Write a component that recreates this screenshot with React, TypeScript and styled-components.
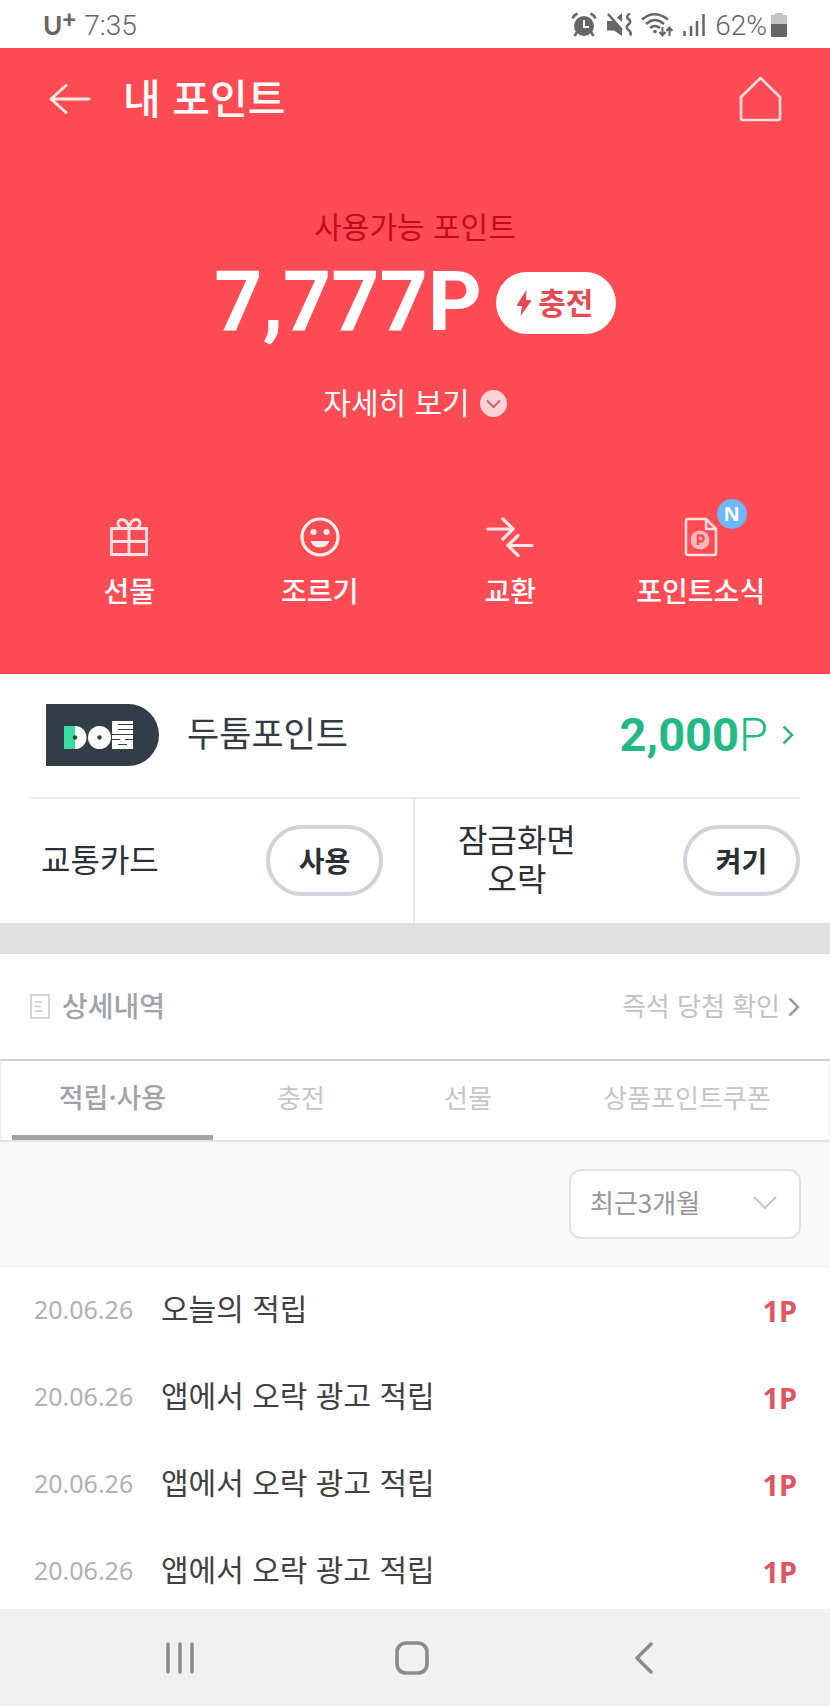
import React from "react";
import styled, { createGlobalStyle } from "styled-components";

const red = "#ff4b53";
const hangul = `"Noto Sans CJK KR", "Noto Sans", sans-serif`;
const latin = `Roboto, "Noto Sans CJK KR", sans-serif`;

const GlobalStyle = createGlobalStyle`
  *, *::before, *::after { box-sizing: border-box; }
  body { margin: 0; background: #ffffff; }
  button, select { font-family: inherit; color: inherit; cursor: pointer; }
  h1, h2, p, ul { margin: 0; padding: 0; font-weight: inherit; }
  svg { display: block; flex: none; }
`;

const Page = styled.div`
  display: flex;
  flex-direction: column;
  min-height: 100vh;
  font-family: ${hangul};
  color: #2b3036;
`;

const PlainButton = styled.button`
  display: flex;
  align-items: center;
  justify-content: center;
  padding: 0;
  border: 0;
  background: none;
`;

/* Hangul sits low in its line box, so labels carry a little space below. */
const Label = styled.span`
  padding-bottom: 4px;
`;

/* Status bar */
const StatusBar = styled.div`
  display: flex;
  align-items: center;
  justify-content: space-between;
  height: 48px;
  padding: 2px 43px 0 43px;
  color: #666666;
  font-family: ${latin};
  font-size: 28px;
  font-weight: 300;
`;

const StatusGroup = styled.div<{ $gap: number }>`
  display: flex;
  align-items: center;
  gap: ${(p) => p.$gap}px;
`;

const Carrier = styled.span`
  display: flex;
  align-items: flex-start;
  font-family: Lato, sans-serif;
  font-size: 26px;
  font-weight: 700;
  line-height: 32px;
`;

const CarrierPlus = styled.span`
  font-size: 24px;
  font-weight: 900;
  line-height: 20px;
`;

/* Red summary */
const Hero = styled.section`
  display: flex;
  flex-direction: column;
  align-items: center;
  padding-bottom: 64px;
  background: ${red};
  color: #ffffff;
`;

const Header = styled.header`
  display: flex;
  align-items: center;
  align-self: stretch;
  gap: 32px;
  height: 102px;
  padding: 0 48px;
`;

const Title = styled.h1`
  flex: 1;
  padding-bottom: 6px;
  font-size: 41px;
  font-weight: 500;
  line-height: 60px;
`;

const Caption = styled.p`
  margin-top: 55px;
  color: #c40a1c;
  font-size: 30px;
  line-height: 40px;
`;

const Balance = styled.div`
  display: flex;
  align-items: center;
  gap: 14px;
  margin-top: 27px;
`;

const Amount = styled.strong`
  padding-bottom: 2px;
  font-family: ${latin};
  font-size: 84px;
  font-weight: 700;
  line-height: 60px;
`;

const ChargeButton = styled(PlainButton)`
  gap: 6px;
  width: 120px;
  height: 62px;
  padding-right: 2px;
  border-radius: 31px;
  background: #ffffff;
  color: #e84a53;
  font-size: 30px;
  font-weight: 700;
`;

const DetailButton = styled(PlainButton)`
  gap: 10px;
  margin-top: 47px;
  color: #ffffff;
  font-size: 30px;
  line-height: 40px;
`;

const Actions = styled.nav`
  display: grid;
  grid-template-columns: repeat(4, 1fr);
  align-self: stretch;
  margin-top: 92px;
  padding: 0 34px;
`;

const Action = styled(PlainButton)`
  flex-direction: column;
  gap: 13px;
  color: #ffffff;
  font-size: 28px;
  font-weight: 500;
  line-height: 40px;
`;

const ActionIcon = styled.span`
  position: relative;
  display: flex;
  align-items: center;
  justify-content: center;
  width: 48px;
  height: 40px;
`;

const NewBadge = styled.span`
  position: absolute;
  top: -18px;
  left: 40px;
  width: 30px;
  height: 30px;
  border-radius: 50%;
  background: #6cb8fb;
  font-family: "Noto Sans", sans-serif;
  font-size: 20px;
  font-weight: 700;
  line-height: 30px;
  text-align: center;
`;

/* Partner points and toggles */
const Partner = styled.section`
  display: flex;
  align-items: center;
  height: 123px;
  padding: 0 36px 2px 46px;
`;

const PartnerName = styled.h2`
  flex: 1;
  margin-left: 28px;
  padding-bottom: 5px;
  color: #333b44;
  font-size: 35px;
  line-height: 48px;
`;

const PartnerLink = styled.a`
  display: flex;
  align-items: center;
  gap: 14px;
  color: #22b985;
  font-family: ${latin};
  font-size: 47px;
  font-weight: 700;
  line-height: 56px;
  text-decoration: none;
`;

const Unit = styled.span`
  font-weight: 300;
`;

const Toggles = styled.section`
  display: grid;
  grid-template-columns: 1fr 1fr;
  margin: 0 30px;
  border-top: 2px solid #e9ebec;
`;

const Toggle = styled.div<{ $first?: boolean }>`
  display: flex;
  align-items: center;
  justify-content: space-between;
  height: 124px;
  padding: ${(p) => (p.$first ? "0 30px 2px 11px" : "0 0 2px 43px")};
  border-right: ${(p) => (p.$first ? "2px solid #e9ebec" : "0")};
`;

const ToggleLabel = styled.p`
  padding-bottom: 4px;
  font-size: 32px;
  line-height: 39px;
  text-align: center;
`;

const PillButton = styled(PlainButton)`
  width: 117px;
  height: 71px;
  border: 4px solid #d0d3da;
  border-radius: 36px;
  background: #ffffff;
  font-size: 28px;
  font-weight: 700;
`;

const Divider = styled.div`
  height: 31px;
  background: #e0e0e0;
`;

/* History */
const HistoryHeader = styled.header`
  display: flex;
  align-items: center;
  justify-content: space-between;
  height: 105px;
  padding: 0 30px;
`;

const HistoryTitle = styled.h2`
  display: flex;
  align-items: center;
  gap: 12px;
  color: #9ea4aa;
  font-size: 28px;
  font-weight: 500;
`;

const HistoryLink = styled.a`
  display: flex;
  align-items: center;
  gap: 8px;
  color: #bfc3c8;
  font-size: 26px;
  text-decoration: none;
`;

const Tabs = styled.div`
  display: grid;
  grid-template-columns: 201fr 176fr 158fr 280fr;
  height: 83px;
  padding: 0 2px 0 11px;
  border: 1px solid #ececee;
  border-top: 2px solid #cdd0d5;
  border-bottom: 2px solid #e0e2e4;
`;

const Tab = styled(PlainButton)<{ $active?: boolean }>`
  padding-bottom: 3px;
  border-bottom: 5px solid ${(p) => (p.$active ? "#9ea4a9" : "transparent")};
  color: ${(p) => (p.$active ? "#9ea4a9" : "#c3c6ca")};
  font-size: ${(p) => (p.$active ? 27 : 26)}px;
  font-weight: ${(p) => (p.$active ? 500 : 400)};
`;

const Filter = styled.div`
  display: flex;
  justify-content: flex-end;
  padding: 27px 29px;
  border-bottom: 1px solid #eeeeee;
  background: #fafafa;
`;

const SelectBox = styled.div`
  position: relative;
  width: 232px;
  height: 70px;
  color: #92979d;
`;

const Select = styled.select`
  width: 100%;
  height: 100%;
  padding: 0 19px 6px 19px;
  appearance: none;
  border: 2px solid #dfe1e6;
  border-radius: 12px;
  background: #ffffff;
  font-size: 26px;
`;

const SelectArrow = styled.svg`
  position: absolute;
  top: 27px;
  right: 24px;
  pointer-events: none;
`;

const List = styled.ul`
  display: flex;
  flex-direction: column;
  gap: 47px;
  padding: 23px 33px 18px 34px;
  list-style: none;
`;

const Entry = styled.li`
  display: flex;
  align-items: center;
  height: 40px;
  color: #404040;
  font-size: 30px;
`;

const EntryDate = styled.time`
  width: 127px;
  padding-bottom: 2px;
  color: #b2b2b2;
  font-family: "Noto Sans", sans-serif;
  font-size: 25px;
`;

const EntryName = styled.span`
  flex: 1;
  padding-bottom: 6px;
`;

const EntryPoints = styled.strong`
  color: #dd5660;
  font-family: "Noto Sans", sans-serif;
  font-size: 29px;
  font-weight: 700;
`;

const SystemNav = styled.nav`
  display: grid;
  grid-template-columns: repeat(3, 1fr);
  height: 97px;
  margin-top: auto;
  padding: 0 70px 0 64px;
  background: #f1f1f1;
`;

const AlarmIcon = () => (
  <svg width="26" height="26" viewBox="0 0 26 26">
    <circle cx="13" cy="14" r="10" fill="#666" />
    <path d="M6 20 3.500 24M20 20l2.500 4M1.500 6.500Q3 3 6.500 1.500M24.500 6.500Q23 3 19.500 1.500" stroke="#666" strokeWidth="2.500" fill="none" />
    <path d="M13 8v7h5" stroke="#fff" strokeWidth="2" fill="none" />
  </svg>
);

const MuteIcon = () => (
  <svg width="26" height="26" viewBox="0 0 26 26">
    <path d="M1 9h6l9 9v6L8 18.500H1ZM16 1v9l-5-4.500Z" fill="#666" />
    <path d="M2 2l14 16" stroke="#666" strokeWidth="2.500" />
    <path d="M24 1.500q-5 2.700-1.500 5.500t0 5.500 0 5.500 1.500 5.500" stroke="#666" strokeWidth="2.500" fill="none" />
  </svg>
);

const WifiIcon = () => (
  <svg width="32" height="26" viewBox="0 0 32 26" fill="none" stroke="#666" strokeWidth="2.500">
    <path d="M1 7.500Q13-3 27 7.500M5 12q9-8 18 0M9 16q5-4 10 0" />
    <circle cx="14" cy="19.500" r="1.800" fill="#666" stroke="none" />
    <path d="M21.500 15v8m-3-3 3 3.500 3-3.500M28.500 24v-8m-3 3 3-3.500 3 3.500" strokeWidth="2" />
  </svg>
);

const SignalIcon = () => (
  <svg width="24" height="26" viewBox="0 0 24 26" stroke="#666" strokeWidth="2.500">
    <path d="M2.500 19v5M9 14v10M15 9v15M21.500 2v22" />
  </svg>
);

const BatteryIcon = () => (
  <svg width="16" height="26" viewBox="0 0 16 26">
    <path d="M4 1h8v2h4v10H0V3h4Z" fill="#c6c6c6" />
    <path d="M0 12h16v12q0 1-1 1H1q-1 0-1-1Z" fill="#666" />
  </svg>
);

const BackIcon = () => (
  <svg width="43" height="32" viewBox="0 0 43 32" fill="none" stroke="#ffe9ea" strokeWidth="3" strokeLinecap="round" strokeLinejoin="round">
    <path d="M41 16H3M18 2.500 3 16l15 13.500" />
  </svg>
);

const HomeIcon = () => (
  <svg width="43" height="46" viewBox="0 0 43 46" fill="none" stroke="#ffdcdd" strokeWidth="2.600" strokeLinejoin="round">
    <path d="M21.500 2 41 21v21q0 2-2 2H4q-2 0-2-2V21Z" />
  </svg>
);

const BoltIcon = () => (
  <svg width="16" height="28" viewBox="0 0 16 28" fill="#e84a53">
    <path d="M10.500 1 1 15.500q-.5 1.500 1 1.500h4L4.500 27 15 12.500q.5-1.500-1-1.500h-4Z" />
  </svg>
);

const DownCircle = () => (
  <svg width="27" height="27" viewBox="0 0 27 27" fill="none">
    <circle cx="13.500" cy="13.500" r="13.500" fill="#ffd3d6" />
    <path d="m7.500 11 6 6 6-6" stroke="#d0606a" strokeWidth="2" strokeLinecap="round" />
  </svg>
);

const GiftIcon = () => (
  <svg width="38" height="38" viewBox="0 0 38 38" fill="none" stroke="#ffe4e6" strokeWidth="2.800">
    <path d="M1.500 10.500h35V36.500h-35ZM1.500 23.500h35M19 10.500V36" />
    <path d="M19 10.500C18 5 15.500 1.500 12 1.500 9 1.500 7.500 4 8 6.500 8.500 8.500 10 10 12 10.500M19 10.500c1-5.500 3.500-9 7-9 3 0 4.500 2.500 4 5-.5 2-2 3.500-4 4" />
  </svg>
);

const SmileIcon = () => (
  <svg width="40" height="40" viewBox="0 0 40 40" fill="#fff0f0">
    <circle cx="20" cy="20" r="18" fill="none" stroke="#fff0f0" strokeWidth="3.200" />
    <circle cx="13.500" cy="15" r="3" />
    <circle cx="26.500" cy="15" r="3" />
    <path d="M10.500 24h19q-2.500 6.500-9.500 6.500T10.500 24Z" />
  </svg>
);

const SwapIcon = () => (
  <svg width="48" height="40" viewBox="0 0 48 40" fill="none" stroke="#ffe6e7" strokeWidth="3.200" strokeLinecap="round" strokeLinejoin="round">
    <path d="M2 12h25M17 2l10 10-10 10M46 28.500H22M32 18.500l-10 10 10 10" />
  </svg>
);

const NewsIcon = () => (
  <svg width="34" height="40" viewBox="0 0 34 40" fill="none" stroke="#ffdfe1" strokeWidth="2.500" strokeLinejoin="round">
    <path d="M4 2h18l10 10v24q0 2-2 2H4q-2 0-2-2V4q0-2 2-2ZM22 2v10h10" />
    <circle cx="16" cy="23" r="9.500" fill="#ffb9bd" stroke="none" />
    <path d="M14 28v-9.500h3q2.500 0 2.500 3t-2.500 3h-3" stroke="#f0505a" />
  </svg>
);

const PartnerLogo = () => (
  <svg width="113" height="62" viewBox="0 0 113 62" role="img" aria-label="DO툼">
    <path d="M0 0h82a31 31 0 0 1 0 62H0Z" fill="#333d47" />
    <rect x="18" y="22" width="12" height="23" fill="#37e0a0" />
    <path d="M29 22a11.500 11.500 0 0 1 0 23Z" fill="#fff" />
    <circle cx="29" cy="33.500" r="2.200" fill="#333d47" />
    <circle cx="53.500" cy="33.500" r="11.500" fill="#fff" />
    <circle cx="53.500" cy="33.500" r="2.200" fill="#333d47" />
    <rect x="66" y="17" width="21" height="28" fill="#fff" />
    <path d="M72 20.500h15M72 25.500h15M66 30.500h21M66 35.500h8M79 35.500h8M72 40.500h9" stroke="#333d47" strokeWidth="1.200" />
  </svg>
);

const ChevronRight = ({ color }: { color: string }) => (
  <svg width="12" height="20" viewBox="0 0 12 20" fill="none" stroke={color} strokeWidth="2.500">
    <path d="m1.500 1.500 8.500 8.500-8.500 8.500" />
  </svg>
);

const DocumentIcon = () => (
  <svg width="20" height="25" viewBox="0 0 20 25" fill="none" stroke="#c8cccf">
    <rect x="1" y="1" width="18" height="23" strokeWidth="1.600" />
    <path d="M5 8h7M5 12.500h6M5 17h8" strokeWidth="1.600" />
  </svg>
);

const actions = [
  { label: "선물", icon: <GiftIcon /> },
  { label: "조르기", icon: <SmileIcon /> },
  { label: "교환", icon: <SwapIcon /> },
  { label: "포인트소식", icon: <NewsIcon />, isNew: true },
];

const tabs = ["적립·사용", "충전", "선물", "상품포인트쿠폰"];

const entries = [
  { date: "20.06.26", name: "오늘의 적립", points: "1P" },
  { date: "20.06.26", name: "앱에서 오락 광고 적립", points: "1P" },
  { date: "20.06.26", name: "앱에서 오락 광고 적립", points: "1P" },
  { date: "20.06.26", name: "앱에서 오락 광고 적립", points: "1P" },
];

export default function App() {
  return (
    <Page lang="ko">
      <GlobalStyle />
      <StatusBar>
        <StatusGroup $gap={8}>
          <Carrier>
            U<CarrierPlus>+</CarrierPlus>
          </Carrier>
          <span>7:35</span>
        </StatusGroup>
        <StatusGroup $gap={9}>
          <AlarmIcon />
          <MuteIcon />
          <WifiIcon />
          <SignalIcon />
          <StatusGroup $gap={4}>
            <span>62%</span>
            <BatteryIcon />
          </StatusGroup>
        </StatusGroup>
      </StatusBar>

      <Hero>
        <Header>
          <PlainButton aria-label="뒤로">
            <BackIcon />
          </PlainButton>
          <Title>내 포인트</Title>
          <PlainButton aria-label="홈">
            <HomeIcon />
          </PlainButton>
        </Header>
        <Caption>사용가능 포인트</Caption>
        <Balance>
          <Amount>7,777P</Amount>
          <ChargeButton>
            <BoltIcon />
            <Label>충전</Label>
          </ChargeButton>
        </Balance>
        <DetailButton>
          <Label>자세히 보기</Label>
          <DownCircle />
        </DetailButton>
        <Actions>
          {actions.map((a) => (
            <Action key={a.label}>
              <ActionIcon>
                {a.icon}
                {a.isNew && <NewBadge>N</NewBadge>}
              </ActionIcon>
              {a.label}
            </Action>
          ))}
        </Actions>
      </Hero>

      <Partner>
        <PartnerLogo />
        <PartnerName>두툼포인트</PartnerName>
        <PartnerLink href="#points">
          <span>
            2,000<Unit>P</Unit>
          </span>
          <ChevronRight color="#3fae88" />
        </PartnerLink>
      </Partner>

      <Toggles>
        <Toggle $first>
          <ToggleLabel>교통카드</ToggleLabel>
          <PillButton>사용</PillButton>
        </Toggle>
        <Toggle>
          <ToggleLabel>
            잠금화면
            <br />
            오락
          </ToggleLabel>
          <PillButton>켜기</PillButton>
        </Toggle>
      </Toggles>
      <Divider />

      <HistoryHeader>
        <HistoryTitle>
          <DocumentIcon />
          <Label>상세내역</Label>
        </HistoryTitle>
        <HistoryLink href="#winners">
          <Label>즉석 당첨 확인</Label>
          <ChevronRight color="#9a9ea3" />
        </HistoryLink>
      </HistoryHeader>
      <Tabs role="tablist">
        {tabs.map((t, i) => (
          <Tab key={t} role="tab" aria-selected={i === 0} $active={i === 0}>
            {t}
          </Tab>
        ))}
      </Tabs>
      <Filter>
        <SelectBox>
          <Select aria-label="조회 기간" defaultValue="3">
            <option value="3">최근3개월</option>
          </Select>
          <SelectArrow width="24" height="14" viewBox="0 0 24 14" fill="none" stroke="#c3c6cb" strokeWidth="2">
            <path d="m1 1 11 11L23 1" />
          </SelectArrow>
        </SelectBox>
      </Filter>
      <List>
        {entries.map((e, i) => (
          <Entry key={i}>
            <EntryDate>{e.date}</EntryDate>
            <EntryName>{e.name}</EntryName>
            <EntryPoints>{e.points}</EntryPoints>
          </Entry>
        ))}
      </List>

      <SystemNav>
        <PlainButton aria-label="최근 앱">
          <svg width="30" height="32" viewBox="0 0 30 32" stroke="#8c8c8c" strokeWidth="3.500" strokeLinecap="round">
            <path d="M3 2v28M15 2v28M27 2v28" />
          </svg>
        </PlainButton>
        <PlainButton aria-label="홈 화면">
          <svg width="34" height="34" viewBox="0 0 34 34" fill="none" stroke="#8c8c8c" strokeWidth="3.600">
            <rect x="2" y="2" width="30" height="30" rx="9" />
          </svg>
        </PlainButton>
        <PlainButton aria-label="이전">
          <svg width="20" height="32" viewBox="0 0 20 32" fill="none" stroke="#8c8c8c" strokeWidth="3.500" strokeLinecap="round" strokeLinejoin="round">
            <path d="M17 2 3 16l14 14" />
          </svg>
        </PlainButton>
      </SystemNav>
    </Page>
  );
}
